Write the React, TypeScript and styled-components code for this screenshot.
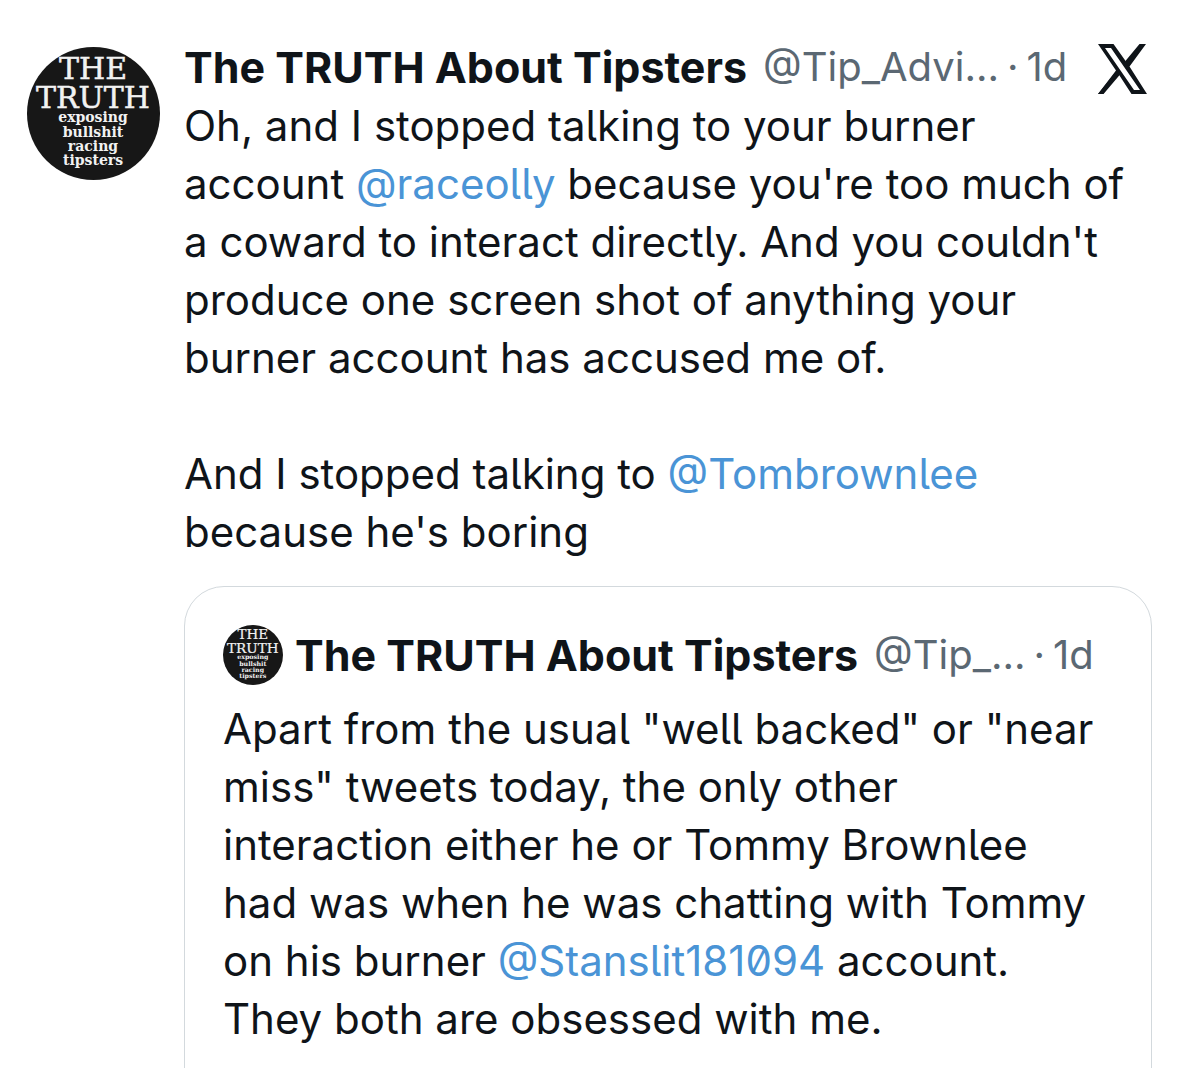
import React from 'react';
import styled, { createGlobalStyle } from 'styled-components';

const GlobalStyle = createGlobalStyle`
  * { box-sizing: border-box; }
  body {
    margin: 0;
    background: #fff;
    color: #0f1419;
    font-family: Inter, Roboto, 'Liberation Sans', sans-serif;
    font-feature-settings: 'cv05', 'zero';
    overflow-x: hidden;
  }
  #root { height: 100vh; overflow: hidden; }
`;

const Post = styled.article`
  display: grid;
  grid-template-columns: 133px minmax(0, 1fr);
  column-gap: 24px;
  padding: 37px 26px 0 27px;
`;

const AvatarLink = styled.a<{ $size: number; $drop?: number }>`
  display: block;
  flex: none;
  width: ${(p) => p.$size}px;
  height: ${(p) => p.$size}px;
  margin-top: ${(p) => p.$drop ?? 0}px;
  svg { display: block; width: 100%; height: 100%; }
`;

const Header = styled.header`
  display: flex;
  align-items: center;
  height: 60px;
  gap: 12px;
  line-height: 58px;
  white-space: nowrap;
`;

const Name = styled.a`
  color: inherit;
  text-decoration: none;
  font-size: 43px;
  font-weight: 700;
`;

const Meta = styled.div`
  display: flex;
  gap: 8px;
  margin-left: 4px;
  color: #5b6873;
  font-size: 40px;
`;

const LogoLink = styled.a`
  margin: 4px 5px 0 auto;
  svg { display: block; width: 49px; height: 50px; }
`;

const Text = styled.p`
  margin: 0;
  font-size: 42px;
  line-height: 58px;
`;

const Line = styled.span`
  display: block;
  min-height: 58px;
`;

const Mention = styled.a`
  color: #4a94d6;
  text-decoration: none;
`;

const Quote = styled.section`
  height: 600px;
  margin-top: 25px;
  padding: 38px;
  border: 1px solid #d3d9dd;
  border-radius: 40px;
  ${Text} { margin-top: 15px; }
`;

function Avatar({ size, drop }: { size: number; drop?: number }) {
  return (
    <AvatarLink href="#profile" aria-label="Profile" $size={size} $drop={drop}>
      <svg viewBox="0 0 133 133" fill="#f2f2f2" textAnchor="middle" fontFamily="'DejaVu Serif', serif">
        <circle cx="66.5" cy="66.5" r="66.5" fill="#171717" />
        <g fontSize="30" stroke="#f2f2f2" strokeWidth="0.5">
          <text x="66" y="32">THE</text>
          <text x="66" y="61">TRUTH</text>
        </g>
        <g fontSize="14" fontWeight="700">
          <text x="66" y="75">exposing</text>
          <text x="66" y="90">bullshit</text>
          <text x="66" y="104">racing</text>
          <text x="66" y="118">tipsters</text>
        </g>
      </svg>
    </AvatarLink>
  );
}

export default function App() {
  return (
    <>
      <GlobalStyle />
      <Post>
        <Avatar size={133} drop={10} />
        <div>
          <Header>
            <Name href="#profile">The TRUTH About Tipsters</Name>
            <Meta>
              <span>@Tip_Advi...</span>
              <span>·</span>
              <time>1d</time>
            </Meta>
            <LogoLink href="#x" aria-label="X">
              <svg viewBox="0 0 49 50" fill="#0f1419" fillRule="evenodd">
                <path d="M0 0H15.500L29 19 45 0H48L31.500 22.500 49 50H33.500L20.500 30 5 50H0L18 26.500ZM7 4 36 46H42L13 4Z" />
                <path d="M41.500 0H47L30 21.500 27 17.500ZM0 50H5.500L22.500 30 19.500 26Z" />
              </svg>
            </LogoLink>
          </Header>
          <Text>
            <Line>Oh, and I stopped talking to your burner</Line>
            <Line>
              account <Mention href="#raceolly">@raceolly</Mention> because you're too much of
            </Line>
            <Line>a coward to interact directly. And you couldn't</Line>
            <Line>produce one screen shot of anything your</Line>
            <Line>burner account has accused me of.</Line>
            <Line />
            <Line>
              And I stopped talking to <Mention href="#tombrownlee">@Tombrownlee</Mention>
            </Line>
            <Line>because he's boring</Line>
          </Text>
          <Quote>
            <Header>
              <Avatar size={60} />
              <Name href="#profile">The TRUTH About Tipsters</Name>
              <Meta>
                <span>@Tip_...</span>
                <span>·</span>
                <time>1d</time>
              </Meta>
            </Header>
            <Text>
              <Line>Apart from the usual "well backed" or "near</Line>
              <Line>miss" tweets today, the only other</Line>
              <Line>interaction either he or Tommy Brownlee</Line>
              <Line>had was when he was chatting with Tommy</Line>
              <Line>
                on his burner <Mention href="#stanslit">@Stanslit181094</Mention> account.
              </Line>
              <Line>They both are obsessed with me.</Line>
            </Text>
          </Quote>
        </div>
      </Post>
    </>
  );
}
